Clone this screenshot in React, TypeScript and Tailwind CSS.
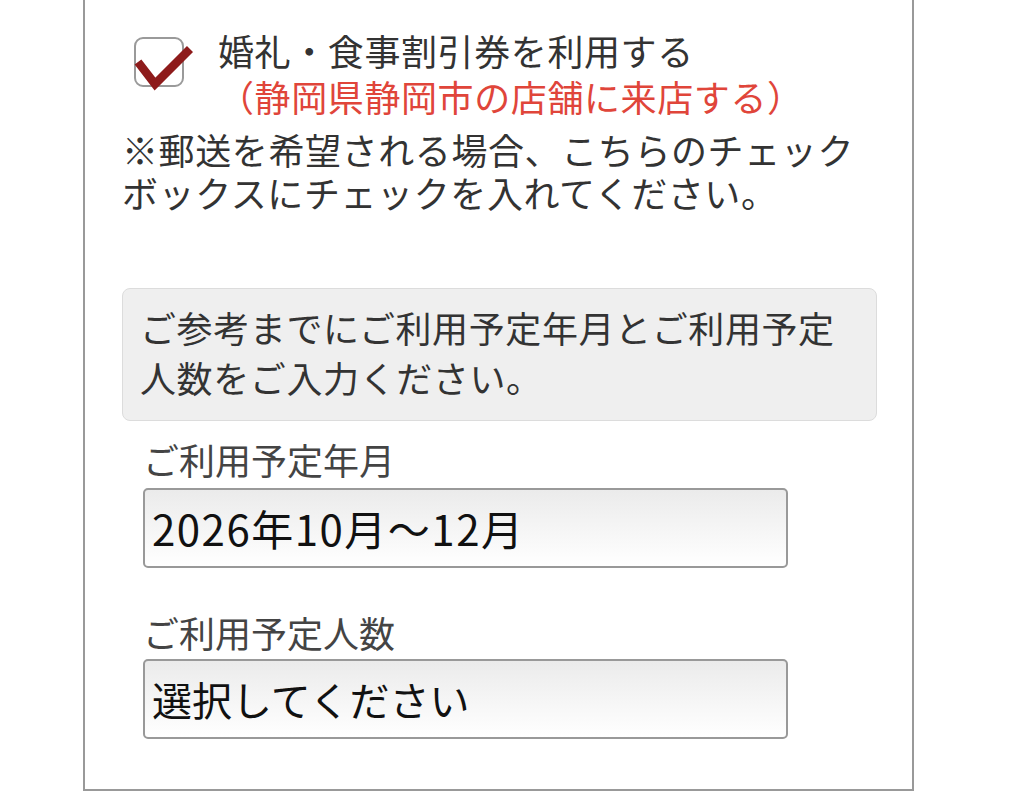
import React from "react";

const font = { fontFamily: '"Noto Sans CJK JP", "Noto Sans", sans-serif' };

export default function App() {
  return (
    <div className="min-h-[793px] w-full bg-white" style={font}>
      <div className="ml-[83px] w-[831px] border-x-2 border-b-2 border-[#999] pl-[37px] pr-[36px] pt-[27px] pb-[50px]">
        {/* checkbox row */}
        <div className="flex items-start">
          <div className="relative ml-[12px] mt-[10px] h-[50px] w-[50px] shrink-0 rounded-[9px] border-2 border-[#9a9a9a] bg-white">
            <svg
              className="absolute left-[-12px] top-[-12px] h-[74px] w-[74px]"
              viewBox="0 0 74 74"
              fill="none"
            >
              <path
                d="M14 35 L 31 57 L 66 22"
                stroke="#8e1b1b"
                strokeWidth="8.5"
                strokeLinecap="butt"
                strokeLinejoin="miter"
              />
            </svg>
          </div>
          <div className="ml-[34px] text-[36px] leading-[46px] tracking-[0.6px]">
            <div className="text-[#333]">婚礼・食事割引券を利用する</div>
            <div className="text-[#e0453a]">（静岡県静岡市の店舗に来店する）</div>
          </div>
        </div>

        {/* note */}
        <div className="mt-[9px] text-[36px] leading-[43px] tracking-[0.6px] text-[#333]">
          <div>※郵送を希望される場合、こちらのチェック</div>
          <div>ボックスにチェックを入れてください。</div>
        </div>

        {/* gray info box */}
        <div className="mt-[74px] w-[755px] rounded-[8px] border border-[#dcdcdc] bg-[#efefef] pl-[17px] pt-[13px] pb-[18px] text-[36px] leading-[50px] tracking-[0.6px] text-[#333]">
          <div>ご参考までにご利用予定年月とご利用予定</div>
          <div>人数をご入力ください。</div>
        </div>

        {/* fields */}
        <div className="pl-[21px]">
          <div className="mt-[15px] text-[36px] leading-[46px] text-[#444]">ご利用予定年月</div>
          <div className="mt-[6px] flex h-[80px] w-[645px] items-center rounded-[5px] border-2 border-[#999] bg-gradient-to-b from-[#ebebeb] to-white pl-[7px] text-[42px] leading-none tracking-[1.5px] text-[#111]">
            2026年10月～12月
          </div>

          <div className="mt-[41px] text-[36px] leading-[46px] text-[#444]">ご利用予定人数</div>
          <div className="mt-[4px] flex h-[80px] w-[645px] items-center rounded-[5px] border-2 border-[#999] bg-gradient-to-b from-[#ebebeb] to-white pl-[7px] text-[40px] leading-none text-[#111]">
            選択してください
          </div>
        </div>
      </div>
    </div>
  );
}
